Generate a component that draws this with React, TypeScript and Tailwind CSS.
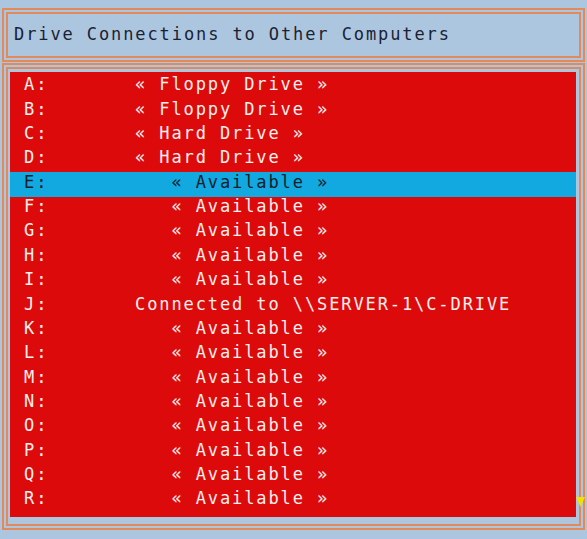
const drives: { letter: string; label: string }[] = [
  { letter: "A:", label: "« Floppy Drive »" },
  { letter: "B:", label: "« Floppy Drive »" },
  { letter: "C:", label: "« Hard Drive »" },
  { letter: "D:", label: "« Hard Drive »" },
  { letter: "E:", label: "   « Available »" },
  { letter: "F:", label: "   « Available »" },
  { letter: "G:", label: "   « Available »" },
  { letter: "H:", label: "   « Available »" },
  { letter: "I:", label: "   « Available »" },
  { letter: "J:", label: "Connected to \\\\SERVER-1\\C-DRIVE" },
  { letter: "K:", label: "   « Available »" },
  { letter: "L:", label: "   « Available »" },
  { letter: "M:", label: "   « Available »" },
  { letter: "N:", label: "   « Available »" },
  { letter: "O:", label: "   « Available »" },
  { letter: "P:", label: "   « Available »" },
  { letter: "Q:", label: "   « Available »" },
  { letter: "R:", label: "   « Available »" },
];

const selected = "E:";

export default function App() {
  return (
    <div className="w-[587px] h-[539px] bg-[#adc6e0] flex flex-col font-['DejaVu_Sans_Mono',monospace] text-[17px] tracking-[1.9px]">
      <div className="mx-[2px] mt-[8px] h-[54px] border-[6px] border-double border-[#e3895a] flex items-center pl-[6px] text-[#1a2232]">
        Drive Connections to Other Computers
      </div>
      <div className="relative mx-[2px] mt-[1px] h-[467px] border-[6px] border-double border-[#e3895a] pt-[3px] pl-[2px] pr-[3px] pb-[7px] flex">
        <div className="flex-1 bg-[#dc0a0a] flex flex-col pt-[1px]">
          {drives.map((d) => (
            <div
              key={d.letter}
              className={`h-[24.35px] flex items-center whitespace-pre pl-[14px] ${
                d.letter === selected
                  ? "bg-[#12a8e0] text-[#10202c] translate-y-[2px]"
                  : "text-[#fff0ee]"
              }`}
            >
              <span className={`w-[111px] shrink-0 ${d.letter === selected ? "-translate-y-[2px]" : ""}`}>{d.letter}</span>
              <span className={d.letter === selected ? "-translate-y-[2px]" : ""}>{d.label}</span>
            </div>
          ))}
        </div>
        <svg
          className="absolute right-[-6px] bottom-[17px]"
          width="9"
          height="10"
          viewBox="0 0 9 10"
        >
          <polygon points="0,0 9,0 4.5,10" fill="#f4e000" />
        </svg>
      </div>
    </div>
  );
}
